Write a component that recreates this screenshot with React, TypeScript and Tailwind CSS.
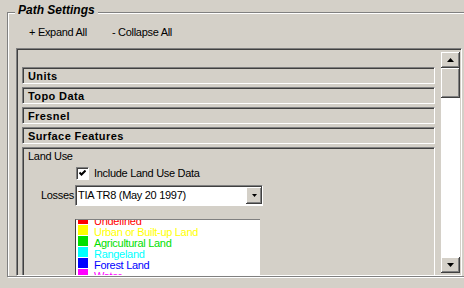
import React from "react";

const sunken =
  "border border-t-[#808080] border-l-[#808080] border-b-white border-r-white shadow-[inset_1px_1px_0_#404040]";
const raised =
  "bg-[#d4d0c8] shadow-[inset_-1px_-1px_0_#404040,inset_1px_1px_0_#fff,inset_-2px_-2px_0_#808080]";

const landUses = [
  { name: "Undefined", color: "#ff0000" },
  { name: "Urban or Built-up Land", color: "#ffff00" },
  { name: "Agricultural Land", color: "#00e000" },
  { name: "Rangeland", color: "#00ffff" },
  { name: "Forest Land", color: "#0000ff" },
  { name: "Water", color: "#ff00ff" },
  { name: "Wetland", color: "#00a0a0" },
];

const Header = ({ label }: { label: string }) => (
  <div className={`${sunken} h-[17px] mb-[3px] pl-[5px] pt-[2px]`}>
    <span className="block text-[11px] leading-[13px] font-bold tracking-[0.4px] text-black">
      {label}
    </span>
  </div>
);

const Arrow = ({ down }: { down?: boolean }) => (
  <svg width="7" height="4" viewBox="0 0 7 4" className="block">
    <path d={down ? "M0 0 H7 L3.5 4 Z" : "M3.5 0 L7 4 H0 Z"} fill="#000" />
  </svg>
);

const App = () => {
  return (
    <div className="w-[464px] h-[288px] overflow-hidden bg-[#d4d0c8] pt-[12px] font-['Liberation_Sans',Arial,sans-serif] text-[11px] tracking-[-0.3px] text-black">
      {/* Path Settings group box */}
      <div className="relative ml-[7px] w-[470px] h-[265px] border border-[#808080] shadow-[inset_1px_1px_0_#fff,1px_1px_0_#fff]">
        <span className="absolute top-[-10px] left-[7px] px-[3px] bg-[#d4d0c8] text-[12px] leading-[14px] font-bold italic tracking-normal">
          Path Settings
        </span>

        <div className="h-[35px] pt-[13px] pl-[21px] flex leading-[13px]">
          <span className="w-[83px]">+ Expand All</span>
          <span>- Collapse All</span>
        </div>

        {/* sunken scroll panel */}
        <div className={`${sunken} ml-[8px] w-[446px] h-[228px] flex`}>
          <div className="flex-1 overflow-hidden pt-[18px] pl-[5px] pr-[6px]">
            <Header label="Units" />
            <Header label="Topo Data" />
            <Header label="Fresnel" />
            <Header label="Surface Features" />

            <div className={`${sunken} h-[200px]`}>
              <div className="pl-[5px] pt-[2px] leading-[13px]">Land Use</div>

              <div className="mt-[4px] ml-[53px] h-[13px] flex items-center gap-[5px]">
                <div className={`${sunken} w-[13px] h-[13px] bg-white flex items-center justify-center`}>
                  <svg width="7" height="7" viewBox="0 0 7 7" className="block">
                    <path d="M0.5 2.5 L2.5 4.5 L6.5 0.5" stroke="#000" strokeWidth="2" fill="none" />
                  </svg>
                </div>
                <span className="leading-[13px]">Include Land Use Data</span>
              </div>

              <div className="mt-[5px] flex items-center">
                <span className="w-[52px] text-right pr-[1px]">Losses</span>
                <div className={`${sunken} w-[188px] h-[21px] bg-white flex items-center`}>
                  <span className="flex-1 pl-[2px] leading-[13px]">TIA TR8 (May 20 1997)</span>
                  <div className={`${raised} w-[16px] h-[17px] flex items-center justify-center`}>
                    <svg width="5" height="3" viewBox="0 0 5 3" className="block">
                      <path d="M0 0 H5 L2.5 3 Z" fill="#000" />
                    </svg>
                  </div>
                </div>
              </div>

              <div className="mt-[13px] ml-[52px] w-[185px] h-[90px] bg-white border-t border-l border-t-[#808080] border-l-[#404040] overflow-hidden">
                <div className="-mt-[6px]">
                  {landUses.map((item) => (
                    <div key={item.name} className="h-[11px] flex items-start">
                      <div
                        className="ml-[2px] w-[10px] h-[10px] shrink-0"
                        style={{ backgroundColor: item.color }}
                      />
                      <span
                        className="ml-[6px] mt-[2px] leading-[11px] whitespace-nowrap"
                        style={{ color: item.color }}
                      >
                        {item.name}
                      </span>
                    </div>
                  ))}
                </div>
              </div>
            </div>
          </div>

          {/* vertical scrollbar */}
          <div className="w-[19px] mr-[1px] pt-[3px] pb-[2px] flex flex-col">
            <div className={`${raised} h-[16px] flex items-center justify-center`}>
              <Arrow />
            </div>
            <div className={`${raised} h-[30px]`} />
            <div className="flex-1 bg-white" />
            <div className={`${raised} h-[16px] flex items-center justify-center`}>
              <Arrow down />
            </div>
          </div>
        </div>
      </div>
    </div>
  );
};

export default App;
